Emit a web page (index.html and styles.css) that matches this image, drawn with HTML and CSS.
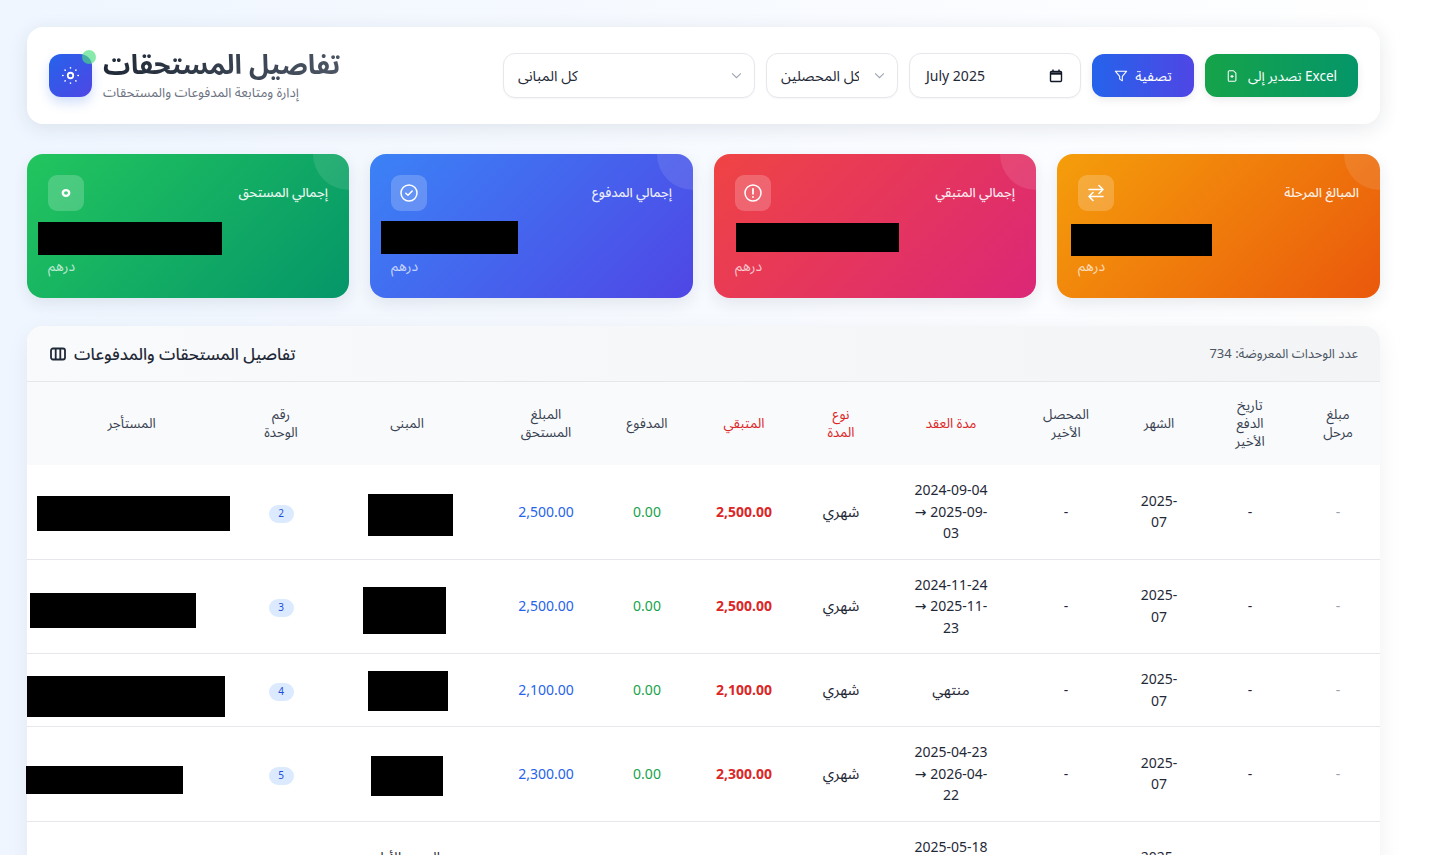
FILE: index.html
```html
<!DOCTYPE html>
<html lang="ar">
<head>
<meta charset="utf-8">
<title>تفاصيل المستحقات</title>
<link rel="stylesheet" href="styles.css">
</head>
<body>
<main class="page">
  <header class="topbar">
    <div class="brand">
      <div class="logo">
        <span class="logo-dot"></span>
        <svg class="logo-icon" viewBox="0 0 18 18" fill="none" stroke="#fff" stroke-linecap="round"><circle cx="9" cy="9" r="2.6" stroke-width="1.7"/><path stroke-width="1.5" d="M9 1.6v.3M9 16.1v.3M1.6 9h.3M16.1 9h.3M3.8 3.8l.2.2M14 14l.2.2M3.8 14.2l.2-.2M14 4l.2-.2"/></svg>
      </div>
      <div class="brand-text">
        <h1>تفاصيل المستحقات</h1>
        <p>إدارة ومتابعة المدفوعات والمستحقات</p>
      </div>
    </div>
    <form class="filters">
      <div class="select-wrap wide">
        <select><option>كل المبانى</option></select>
        <svg class="chev" viewBox="0 0 12 8" fill="none" stroke="#9ca3af" stroke-width="1.2"><path d="M1 1.5l5 5 5-5"/></svg>
      </div>
      <div class="select-wrap narrow">
        <select><option>كل المحصلين</option></select>
        <svg class="chev" viewBox="0 0 12 8" fill="none" stroke="#9ca3af" stroke-width="1.2"><path d="M1 1.5l5 5 5-5"/></svg>
      </div>
      <div class="month">
        <span>July 2025</span>
        <svg class="cal" viewBox="0 0 14 14" fill="none" stroke="#111827"><rect x="1.500" y="2.500" width="11" height="10" rx="1" stroke-width="1.400"/><path stroke-width="2.400" d="M1.500 4.500h11"/><path stroke-width="1.400" d="M4 .5v2.500M10 .5v2.500"/></svg>
      </div>
      <button type="button" class="btn btn-blue">
        <svg class="btn-icon" viewBox="0 0 16 16" fill="none" stroke="#fff" stroke-width="1.2" stroke-linejoin="round"><path d="M1.5 2.5h13l-5 6v5l-3-2v-3z"/></svg>
        <span>تصفية</span>
      </button>
      <button type="button" class="btn btn-green">
        <svg class="btn-icon small" viewBox="0 0 16 16" fill="none" stroke="#fff" stroke-width="1.4" stroke-linejoin="round"><path d="M3 2.5a1.5 1.5 0 0 1 1.5-1.5H10l3.2 3.3v9.2a1.5 1.5 0 0 1-1.5 1.5H4.500A1.500 1.500 0 0 1 3 13.500z"/><path d="M8 6.500v4M6 8.500h4"/></svg>
        <span>تصدير إلى Excel</span>
      </button>
    </form>
  </header>

  <section class="stats">
    <article class="stat green">
      <div class="stat-top">
        <div class="stat-icon"><svg class="ring" viewBox="0 0 10 10" fill="none" stroke="#fff" stroke-width="2.400"><ellipse cx="5" cy="5" rx="3.200" ry="2.900"/></svg></div>
        <h3>إجمالي المستحق</h3>
      </div>
      <div class="amount"><div class="redact s1"></div></div>
      <div class="unit">درهم</div>
    </article>
    <article class="stat blue">
      <div class="stat-top">
        <div class="stat-icon"><svg viewBox="0 0 18 18" fill="none" stroke="#fff" stroke-width="1.500" stroke-linecap="round" stroke-linejoin="round"><circle cx="9" cy="9" r="8"/><path d="M5.800 9.300l2.200 2 4.200-4.300"/></svg></div>
        <h3>إجمالي المدفوع</h3>
      </div>
      <div class="amount"><div class="redact s2"></div></div>
      <div class="unit">درهم</div>
    </article>
    <article class="stat red">
      <div class="stat-top">
        <div class="stat-icon"><svg viewBox="0 0 18 18" fill="none" stroke="#fff" stroke-width="1.500" stroke-linecap="round"><circle cx="9" cy="9" r="8"/><path stroke-width="1.800" d="M9 4.800v5M9 13v.1"/></svg></div>
        <h3>إجمالي المتبقي</h3>
      </div>
      <div class="amount"><div class="redact s3"></div></div>
      <div class="unit">درهم</div>
    </article>
    <article class="stat orange">
      <div class="stat-top">
        <div class="stat-icon"><svg viewBox="0 0 18 18" fill="none" stroke="#fff" stroke-width="1.600" stroke-linecap="round" stroke-linejoin="round"><path d="M2 5.500h14M12 1.500l4 4-4 4M16 12.500H2M6 8.500l-4 4 4 4"/></svg></div>
        <h3>المبالغ المرحلة</h3>
      </div>
      <div class="amount"><div class="redact s4"></div></div>
      <div class="unit">درهم</div>
    </article>
  </section>

  <section class="panel">
    <div class="panel-head">
      <div class="panel-title">
        <svg class="cols-icon" viewBox="0 0 16 14" fill="none" stroke="#1f2937" stroke-width="1.800"><rect x="1" y="1.500" width="14" height="11" rx="2"/><path d="M5.700 1.500v11M10.300 1.500v11"/></svg>
        <h2>تفاصيل المستحقات والمدفوعات</h2>
      </div>
      <div class="panel-count">عدد الوحدات المعروضة: 734</div>
    </div>
    <table class="grid" dir="rtl">
      <colgroup>
        <col class="c1"><col class="c2"><col class="c3"><col class="c4"><col class="c5"><col class="c6"><col class="c7"><col class="c8"><col class="c9"><col class="c10"><col class="c11"><col class="c12">
      </colgroup>
      <thead>
        <tr>
          <th>مبلغ<br>مرحل</th><th>تاريخ<br>الدفع<br>الأخير</th><th>الشهر</th><th>المحصل<br>الأخير</th>
          <th class="hot">مدة العقد</th><th class="hot">نوع<br>المدة</th><th class="hot">المتبقي</th>
          <th>المدفوع</th><th>المبلغ<br>المستحق</th><th>المبنى</th><th>رقم<br>الوحدة</th><th>المستأجر</th>
        </tr>
      </thead>
      <tbody>
        <tr>
          <td class="mute">-</td><td>-</td><td><span class="ym">2025-07</span></td><td>-</td><td><span class="period">2024-09-04 → 2025-09-03</span></td><td class="term">شهري</td>
          <td class="rest">2,500.00</td><td class="paid">0.00</td><td class="due">2,500.00</td>
          <td><div class="redact b1"></div></td><td><span class="badge">2</span></td><td><div class="redact t1"></div></td>
        </tr>
        <tr>
          <td class="mute">-</td><td>-</td><td><span class="ym">2025-07</span></td><td>-</td><td><span class="period">2024-11-24 → 2025-11-23</span></td><td class="term">شهري</td>
          <td class="rest">2,500.00</td><td class="paid">0.00</td><td class="due">2,500.00</td>
          <td><div class="redact b2"></div></td><td><span class="badge">3</span></td><td><div class="redact t2"></div></td>
        </tr>
        <tr>
          <td class="mute">-</td><td>-</td><td><span class="ym">2025-07</span></td><td>-</td><td class="term">منتهي</td><td class="term">شهري</td>
          <td class="rest">2,100.00</td><td class="paid">0.00</td><td class="due">2,100.00</td>
          <td><div class="redact b3"></div></td><td><span class="badge">4</span></td><td><div class="redact t3"></div></td>
        </tr>
        <tr>
          <td class="mute">-</td><td>-</td><td><span class="ym">2025-07</span></td><td>-</td><td><span class="period">2025-04-23 → 2026-04-22</span></td><td class="term">شهري</td>
          <td class="rest">2,300.00</td><td class="paid">0.00</td><td class="due">2,300.00</td>
          <td><div class="redact b4"></div></td><td><span class="badge">5</span></td><td><div class="redact t4"></div></td>
        </tr>
        <tr>
          <td class="mute">-</td><td>-</td><td><span class="ym">2025-07</span></td><td>-</td><td><span class="period">2025-05-18 → 2026-05-17</span></td><td class="term">شهري</td>
          <td class="rest">2,300.00</td><td class="paid">0.00</td><td class="due">2,300.00</td>
          <td>المبنى الأول<br>الرئيسي</td><td><span class="badge">6</span></td><td></td>
        </tr>
      </tbody>
    </table>
  </section>
</main>
</body>
</html>
```
FILE: styles.css
```css
* { box-sizing: border-box; }
html, body { margin: 0; padding: 0; }
body {
  font-family: "Noto Sans Arabic", "Noto Sans", "Open Sans", "DejaVu Sans", sans-serif;
  background: linear-gradient(90deg, #eff6ff 0%, #f7faff 50%, #ffffff 100%);
  color: #111827;
  font-size: 14px;
}
.page { padding: 27px 50px 27px 27px; }

.topbar {
  display: flex; align-items: center; justify-content: space-between;
  height: 97px; padding: 0 22px;
  background: #fff; border-radius: 16px;
  box-shadow: 0 4px 20px rgba(30, 41, 59, .1);
}
.brand { display: flex; align-items: center; gap: 11px; }
.logo {
  position: relative; width: 43px; height: 43px; border-radius: 12px;
  display: flex; align-items: center; justify-content: center;
  background: linear-gradient(135deg, #2563eb, #4f46e5);
  box-shadow: 0 6px 12px rgba(37, 99, 235, .2);
}
.logo-icon { width: 19px; height: 19px; }
.logo-dot {
  position: absolute; top: -4px; right: -4px; width: 14px; height: 14px;
  border-radius: 50%; background: rgba(74, 222, 128, .65);
}
.brand-text h1 {
  margin: 0; font-size: 27px; line-height: 34px; font-weight: 700;
  background: linear-gradient(90deg, #1f2937, #4b5563);
  -webkit-background-clip: text; background-clip: text; color: transparent;
}
.brand-text p { margin: 2px 0 0; font-size: 13.200px; line-height: 17px; color: #6b7280; }
.filters { display: flex; align-items: center; gap: 11px; }
.select-wrap { position: relative; height: 45px; }
.select-wrap.wide { width: 252px; }
.select-wrap.narrow { width: 132px; }
.select-wrap select {
  appearance: none; width: 100%; height: 100%;
  padding: 1px 38px 0 14px; border: 1px solid #e5e7eb; border-radius: 12px;
  background: #fff; font: inherit; font-size: 14.500px; color: #1f2937; direction: ltr;
  box-shadow: 0 1px 2px rgba(0, 0, 0, .04);
}
.chev { position: absolute; top: 19px; right: 13px; width: 11px; height: 7px; }
.month {
  display: flex; align-items: center; justify-content: space-between;
  width: 172px; height: 45px; padding: 1px 17px 0 16px;
  border: 1px solid #e5e7eb; border-radius: 12px; background: #fff;
  font-size: 14px; color: #1f2937;
  box-shadow: 0 1px 2px rgba(0, 0, 0, .04);
}
.cal { width: 14px; height: 14px; }
.btn {
  display: flex; align-items: center; justify-content: center; gap: 7px;
  height: 43px; padding: 1px 0 0; border: 0; border-radius: 12px; color: #fff;
  font: inherit; font-size: 14px;
  box-shadow: 0 3px 8px rgba(0, 0, 0, .08);
}
.btn-blue { width: 102px; background: linear-gradient(90deg, #2563eb, #4f46e5); }
.btn-green { width: 153px; gap: 10px; font-size: 13.500px; background: linear-gradient(90deg, #16a34a, #059669); }
.btn-icon { width: 14px; height: 14px; }
.btn-icon.small { width: 12px; height: 12px; }

.stats { display: grid; grid-template-columns: 322px 323px 322px 1fr; gap: 21px; margin-top: 30px; }
.stat {
  position: relative; overflow: hidden; height: 144px; padding: 21px;
  border-radius: 16px; color: #fff;
  box-shadow: 0 6px 16px rgba(30, 41, 59, .09);
}
.stat::after {
  content: ""; position: absolute; top: -36px; right: -36px;
  width: 72px; height: 72px; border-radius: 50%; background: rgba(255, 255, 255, .1);
}
.stat.green { background: linear-gradient(135deg, #22c55e, #059669); }
.stat.blue { background: linear-gradient(135deg, #3b82f6, #4f46e5); }
.stat.red { background: linear-gradient(135deg, #ef4444, #db2777); }
.stat.orange { background: linear-gradient(135deg, #f59e0b, #ea580c); }
.stat-top { display: flex; align-items: center; justify-content: space-between; height: 36px; }
.stat-top h3 { margin: 0; font-size: 13px; font-weight: 500; color: rgba(255, 255, 255, .9); }
.stat-icon {
  width: 36px; height: 36px; border-radius: 9px; background: rgba(255, 255, 255, .2);
  display: flex; align-items: center; justify-content: center;
}
.stat-icon svg { width: 18px; height: 18px; }
.stat-icon svg.ring { width: 10px; height: 10px; }
.amount { height: 45px; position: relative; }
.unit { font-size: 14px; line-height: 20px; color: rgba(255, 255, 255, .7); margin-top: 1px; }

.redact { position: absolute; background: #000; }
.s1 { left: -10px; top: 11px; width: 184px; height: 33px; }
.s2 { left: -10px; top: 10px; width: 137px; height: 33px; }
.s3 { left: 1px; top: 12px; width: 163px; height: 29px; }
.s4 { left: -7px; top: 13px; width: 141px; height: 32px; }

.panel {
  margin-top: 28px; background: #fff; border-radius: 16px;
  box-shadow: 0 6px 24px rgba(30, 41, 59, .06);
}
.panel-head {
  display: flex; align-items: center; justify-content: space-between;
  height: 56px; padding: 1px 22px 0 23px;
  background: linear-gradient(90deg, #f9fafb, #f3f4f6);
  border-bottom: 1px solid #e5e7eb; border-radius: 16px 16px 0 0;
}
.panel-title { display: flex; align-items: center; gap: 8px; }
.panel-title h2 { margin: 0; font-size: 16.500px; font-weight: 500; color: #1f2937; }
.cols-icon { width: 16px; height: 14px; }
.panel-count { font-size: 13px; color: #4b5563; }

.grid { width: 100%; table-layout: fixed; border-collapse: collapse; background: #fff; }
.c1 { width: 84px; } .c2 { width: 92px; } .c3 { width: 90px; } .c4 { width: 96px; }
.c5 { width: 134px; } .c6 { width: 86px; } .c7 { width: 108px; } .c8 { width: 86px; }
.c9 { width: 116px; } .c10 { width: 162px; } .c11 { width: 90px; } .c12 { width: 209px; }
.grid th {
  height: 83px; padding: 0 18px; background: #f9fafb; text-align: center;
  font-size: 13.500px; line-height: 18px; font-weight: 400; color: #374151;
}
.grid th.hot { color: #dc2626; }
.grid td {
  position: relative; padding: 15px 16px 14px; text-align: center; vertical-align: middle;
  font-size: 14px; line-height: 21.500px; color: #1f2937;
  border-bottom: 1px solid #e5e7eb;
}
.period { display: inline-block; width: 86px; direction: ltr; }
.ym { display: inline-block; width: 50px; direction: ltr; }
.grid td.mute { color: #9ca3af; }
.grid td.term { font-size: 15px; color: #1f2937; }
.grid td.rest { font-weight: 700; color: #dc2626; }
.grid td.paid { font-weight: 400; color: #16a34a; }
.grid td.due { font-weight: 400; color: #2563eb; }
.badge {
  display: inline-block; min-width: 25px; padding: 0 4px; height: 18px; line-height: 18px;
  border-radius: 9px; background: #dbeafe; color: #1d4ed8; font-size: 10px;
}
.b1 { left: 42px; top: 29px; width: 85px; height: 42px; }
.b2 { left: 37px; top: 27px; width: 83px; height: 47px; }
.b3 { left: 42px; top: 17px; width: 80px; height: 40px; }
.b4 { left: 45px; top: 29px; width: 72px; height: 40px; }
.t1 { left: 10px; top: 31px; width: 193px; height: 35px; }
.t2 { left: 3px; top: 33px; width: 166px; height: 35px; }
.t3 { left: 0; top: 22px; width: 198px; height: 41px; }
.t4 { left: -1px; top: 39px; width: 157px; height: 28px; }
```
